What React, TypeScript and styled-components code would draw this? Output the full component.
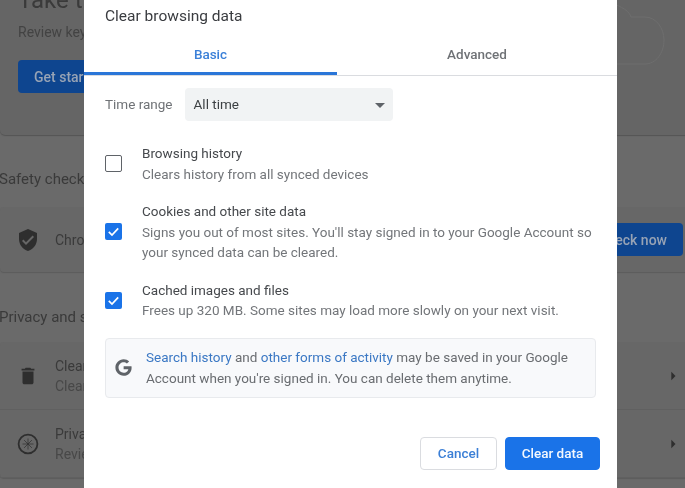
import React from 'react';
import styled, { createGlobalStyle } from 'styled-components';
import { FaGoogle } from 'react-icons/fa';
import { MdArrowDropDown, MdArrowRight, MdDelete, MdVerifiedUser } from 'react-icons/md';

const GlobalStyle = createGlobalStyle`
  html, body {
    margin: 0;
    padding: 0;
    background: #6a6a6a;
    font-family: Roboto, "Liberation Sans", sans-serif;
  }
`;

const Screen = styled.div`
  position: relative;
  width: 685px;
  height: 488px;
  overflow: hidden;
  background: #6a6a6a;
  filter: blur(0.4px);
`;

/* dimmed settings page behind the dialog */
const SettingsPage = styled.div`
  width: 700px;
  display: flex;
  flex-direction: column;
  color: #3a3a3a;
`;

const HeroCard = styled.section`
  position: relative;
  height: 135px;
  box-sizing: border-box;
  padding: 0 18px;
  background: #656565;
  border-radius: 0 0 5px 5px;
  box-shadow: 0 1px 1px #555;
`;

const HeroTitle = styled.h2`
  margin: -14px 0 0;
  font-size: 24px;
  line-height: 28px;
  font-weight: 400;
`;

const HeroText = styled.p`
  margin: 8px 0 0;
  font-size: 14px;
  line-height: 20px;
  color: #434343;
`;

const DarkButton = styled.div`
  flex: none;
  display: flex;
  align-items: center;
  box-sizing: border-box;
  width: 100px;
  height: 33px;
  padding: 0 16px;
  border-radius: 4px;
  background: #0e458f;
  color: #97a3b5;
  font-size: 14px;
  font-weight: 500;
  white-space: nowrap;
`;

const HeroButton = styled(DarkButton)`
  margin-top: 18px;
`;

const HeroArt = styled.svg`
  position: absolute;
  left: 600px;
  top: 0;
`;

const SectionTitle = styled.h3<{ $top: number }>`
  margin: ${p => p.$top}px 0 0;
  font-size: 15px;
  line-height: 20px;
  font-weight: 400;
  text-indent: -1px;
`;

const Card = styled.section<{ $top: number }>`
  margin-top: ${p => p.$top}px;
  background: #676767;
  border-radius: 4px;
  box-shadow: 0 1px 1px #5c5c5c;
`;

const SafetyRow = styled.div`
  display: flex;
  align-items: center;
  height: 65px;
  padding: 0 17px 0 16px;
  font-size: 14px;
`;

const RowIcon = styled.div`
  flex: none;
  display: flex;
  justify-content: center;
  width: 24px;
  margin-right: 15px;
  color: #2e2e2e;

  svg {
    flex: none;
  }
`;

const RowLabel = styled.div`
  flex: 1;
`;

const NowButton = styled(DarkButton)`
  justify-content: flex-end;
`;

const LinkRow = styled.div`
  display: flex;
  align-items: center;
  height: 68px;
  box-sizing: border-box;
  padding: 0 0 0 16px;
  font-size: 14px;
  line-height: 20px;
  border-bottom: 1px solid #606060;
`;

const RowSub = styled.div`
  color: #484848;
`;

const RowArrow = styled(MdArrowRight)`
  margin-right: 17px;
  color: #2e2e2e;
`;

/* modal */
const Dialog = styled.div`
  position: absolute;
  left: 84px;
  top: 0;
  bottom: 0;
  width: 533px;
  display: flex;
  flex-direction: column;
  background: #fff;
`;

const DialogTitle = styled.h1`
  margin: 0;
  padding: 6px 21px 0;
  height: 34px;
  box-sizing: border-box;
  font-size: 15.5px;
  line-height: 20px;
  font-weight: 400;
  color: #3a3c40;
`;

const Tabs = styled.div`
  display: grid;
  grid-template-columns: 253px 1fr;
  height: 42px;
  box-sizing: border-box;
  border-bottom: 1px solid #dadce0;
`;

const Tab = styled.div<{ $active?: boolean }>`
  display: flex;
  align-items: center;
  justify-content: center;
  height: 41px;
  box-sizing: border-box;
  padding: ${p => (p.$active ? '1px 0 0' : '0 0 2px')};
  font-size: 13.5px;
  font-weight: 500;
  color: ${p => (p.$active ? '#3b80d8' : '#6f7276')};
  border-bottom: ${p => (p.$active ? '3px solid #2a76d8' : '0 none')};
`;

const DialogBody = styled.div`
  flex: 1;
  display: flex;
  flex-direction: column;
  padding: 12px 21px 0;
  font-size: 13.5px;
  line-height: 20.5px;
  color: #5f6368;
`;

const RangeRow = styled.div`
  display: flex;
  align-items: center;
  gap: 12px;
  margin-bottom: 22px;
`;

const RangeLabel = styled.span`
  color: #6f7276;
`;

const RangeSelect = styled.div`
  display: flex;
  align-items: center;
  justify-content: space-between;
  width: 208px;
  height: 33px;
  box-sizing: border-box;
  padding: 0 1px 0 9px;
  border-radius: 4px;
  background: #f1f3f4;
  color: #3c4043;
`;

const CheckList = styled.div`
  display: flex;
  flex-direction: column;
  gap: 17px;
`;

const CheckRow = styled.div`
  display: flex;
  align-items: center;
  gap: 20px;
`;

const Box = styled.div<{ $checked?: boolean }>`
  flex: none;
  display: flex;
  align-items: center;
  justify-content: center;
  width: 17px;
  height: 17px;
  box-sizing: border-box;
  border-radius: 2px;
  border: ${p => (p.$checked ? '0 none' : '1.5px solid #5f6368')};
  background: ${p => (p.$checked ? '#1a73e8' : '#fff')};
`;

const CheckTitle = styled.div`
  color: #46494d;
`;

const CheckDesc = styled.div`
  color: #73767a;
`;

const InfoBox = styled.div`
  display: flex;
  align-items: center;
  margin-top: 17px;
  width: 491px;
  height: 60px;
  box-sizing: border-box;
  padding-left: 9px;
  gap: 14px;
  border: 1px solid #e8eaed;
  border-radius: 4px;
  background: #f8f9fb;
  color: #6a6d71;
`;

const GoogleG = styled(FaGoogle)`
  flex: none;
  color: #5f6368;
`;

const InfoLink = styled.a`
  color: #3b78c4;
`;

const Footer = styled.div`
  display: flex;
  justify-content: flex-end;
  gap: 8px;
  margin-top: 39px;
  width: 495px;
`;

const Button = styled.button<{ $primary?: boolean }>`
  height: 33px;
  padding: 0;
  width: ${p => (p.$primary ? '95px' : '77px')};
  border-radius: 4px;
  border: 1px solid ${p => (p.$primary ? '#1a73e8' : '#dadce0')};
  background: ${p => (p.$primary ? '#1a73e8' : '#fff')};
  color: ${p => (p.$primary ? '#f4f8fe' : '#3b7fd6')};
  font-family: inherit;
  font-size: 13.5px;
  font-weight: 500;
`;

const Tick = () => (
  <svg width="13" height="13" viewBox="0 0 13 13" fill="none">
    <path d="M1.8 6.8 L5 10 L11.2 3.4" stroke="#fff" strokeWidth="1.7" />
  </svg>
);

const PrivacyGlyph = () => (
  <svg width="22" height="22" viewBox="0 0 22 22" fill="none" stroke="#2e2e2e">
    <circle cx="11" cy="11" r="9.4" strokeWidth="1.8" />
    <path d="M11 5.5V16.5M5.5 11H16.5M7.1 7.1L14.9 14.9M14.9 7.1L7.1 14.9" strokeWidth="0.7" />
  </svg>
);

const options = [
  { title: 'Browsing history', desc: ['Clears history from all synced devices'], checked: false },
  {
    title: 'Cookies and other site data',
    desc: ["Signs you out of most sites. You'll stay signed in to your Google Account so", 'your synced data can be cleared.'],
    checked: true,
  },
  {
    title: 'Cached images and files',
    desc: ['Frees up 320 MB. Some sites may load more slowly on your next visit.'],
    checked: true,
  },
];

export default function App() {
  return (
    <Screen>
      <GlobalStyle />
      <SettingsPage>
        <HeroCard>
          <HeroTitle>Take the</HeroTitle>
          <HeroText>Review key</HeroText>
          <HeroButton>Get started</HeroButton>
          <HeroArt width="70" height="70" viewBox="0 0 70 70" fill="none" stroke="#6e6e6e" strokeWidth="1">
            <path d="M10 3 C22 6 30 12 31 17 H45 C56 17 64 28 64 40 C64 53 56 64 45 64 H10" />
          </HeroArt>
        </HeroCard>

        <SectionTitle $top={34}>Safety check</SectionTitle>
        <Card $top={18}>
          <SafetyRow>
            <RowIcon>
              <MdVerifiedUser size={24} />
            </RowIcon>
            <RowLabel>Chrome</RowLabel>
            <NowButton>Check now</NowButton>
          </SafetyRow>
        </Card>

        <SectionTitle $top={35}>Privacy and s</SectionTitle>
        <Card $top={15}>
          <LinkRow>
            <RowIcon>
              <MdDelete size={22} />
            </RowIcon>
            <RowLabel>
              <div>Clear</div>
              <RowSub>Clear</RowSub>
            </RowLabel>
            <RowArrow size={20} />
          </LinkRow>
          <LinkRow>
            <RowIcon>
              <PrivacyGlyph />
            </RowIcon>
            <RowLabel>
              <div>Privacy</div>
              <RowSub>Review</RowSub>
            </RowLabel>
            <RowArrow size={20} />
          </LinkRow>
        </Card>
      </SettingsPage>

      <Dialog>
        <DialogTitle>Clear browsing data</DialogTitle>
        <Tabs>
          <Tab $active>Basic</Tab>
          <Tab>Advanced</Tab>
        </Tabs>
        <DialogBody>
          <RangeRow>
            <RangeLabel>Time range</RangeLabel>
            <RangeSelect>
              All time
              <MdArrowDropDown size={24} color="#5f6368" />
            </RangeSelect>
          </RangeRow>
          <CheckList>
            {options.map(o => (
              <CheckRow key={o.title}>
                <Box $checked={o.checked}>{o.checked && <Tick />}</Box>
                <div>
                  <CheckTitle>{o.title}</CheckTitle>
                  {o.desc.map(line => (
                    <CheckDesc key={line}>{line}</CheckDesc>
                  ))}
                </div>
              </CheckRow>
            ))}
          </CheckList>
          <InfoBox>
            <GoogleG size={17} />
            <div>
              <div>
                <InfoLink>Search history</InfoLink> and <InfoLink>other forms of activity</InfoLink> may be saved in your
                Google
              </div>
              <div>Account when you're signed in. You can delete them anytime.</div>
            </div>
          </InfoBox>
          <Footer>
            <Button>Cancel</Button>
            <Button $primary>Clear data</Button>
          </Footer>
        </DialogBody>
      </Dialog>
    </Screen>
  );
}
